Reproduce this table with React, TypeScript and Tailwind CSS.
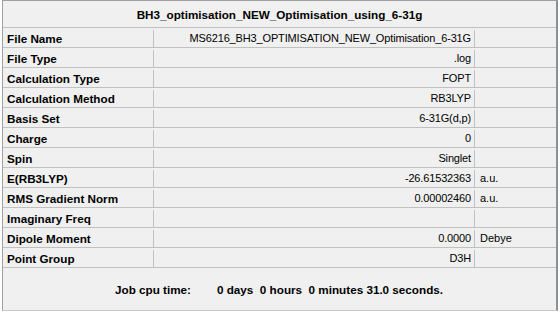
const rows: [string, string, string][] = [
  ["File Name", "MS6216_BH3_OPTIMISATION_NEW_Optimisation_6-31G", ""],
  ["File Type", ".log", ""],
  ["Calculation Type", "FOPT", ""],
  ["Calculation Method", "RB3LYP", ""],
  ["Basis Set", "6-31G(d,p)", ""],
  ["Charge", "0", ""],
  ["Spin", "Singlet", ""],
  ["E(RB3LYP)", "-26.61532363", "a.u."],
  ["RMS Gradient Norm", "0.00002460", "a.u."],
  ["Imaginary Freq", "", ""],
  ["Dipole Moment", "0.0000", "Debye"],
  ["Point Group", "D3H", ""],
];

export default function App() {
  return (
    <div className="w-[560px] h-[314px] bg-white font-['Liberation_Sans',Arial,sans-serif] text-[11px] text-black">
      <div className="ml-[2px] w-[556px] h-[311px] bg-[#f0f0f0] border-l border-l-[#a0a0a0] border-t border-t-[#a0a0a0] border-r-2 border-r-[#8c9099] border-b border-b-[#c8c8c8] flex flex-col">
        <div className="h-[27px] pt-[2px] flex items-center justify-center font-bold text-[11.7px] border-b border-[#c0c0c0]">
          BH3_optimisation_NEW_Optimisation_using_6-31g
        </div>
        {rows.map(([label, value, unit]) => (
          <div key={label} className="h-[20px] pt-[2px] flex border-b border-[#c0c0c0]">
            <div className="w-[151px] pl-[4px] font-bold text-[11.7px] flex items-center border-r border-[#c0c0c0]">
              {label}
            </div>
            <div className="w-[321px] pr-[3px] flex items-center justify-end tracking-[-0.15px] border-r border-[#c0c0c0]">
              {value}
            </div>
            <div className="flex-1 pl-[5px] flex items-center">{unit}</div>
          </div>
        ))}
        <div className="flex-1 pt-[2px] flex items-center pl-[112px] font-bold text-[11.7px] whitespace-pre">
          <span>Job cpu time:</span>
          <span className="ml-[26px]">{"0 days  0 hours  0 minutes 31.0 seconds."}</span>
        </div>
      </div>
    </div>
  );
}
